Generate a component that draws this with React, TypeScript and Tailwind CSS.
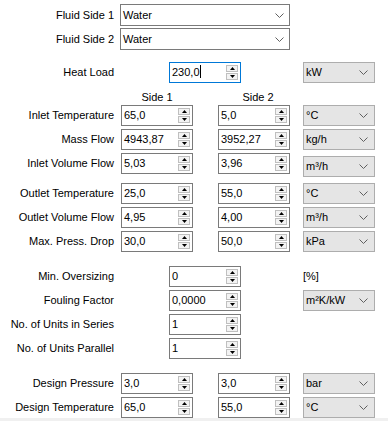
import * as React from 'react';

const Chevron = () => (
  <svg width="9" height="5" viewBox="0 0 9 5" className="shrink-0">
    <path d="M0.5 0.5 L4.5 4.5 L8.5 0.5" fill="none" stroke="#606060" strokeWidth="1" />
  </svg>
);

const Spinner = () => (
  <div className="flex flex-col gap-[1px] w-[12px] shrink-0">
    <div className="h-[7px] border border-[#bfbfbf] bg-[#f3f3f3] flex items-center justify-center">
      <svg width="5" height="3" viewBox="0 0 5 3">
        <path d="M2.5 0 L5 3 L0 3 Z" fill="#000" />
      </svg>
    </div>
    <div className="h-[7px] border border-[#bfbfbf] bg-[#f3f3f3] flex items-center justify-center">
      <svg width="5" height="3" viewBox="0 0 5 3">
        <path d="M0 0 L5 0 L2.5 3 Z" fill="#000" />
      </svg>
    </div>
  </div>
);

const NumBox = ({ value, focused, className = '' }: { value: string; focused?: boolean; className?: string }) => (
  <div
    className={`w-[72px] h-[21px] border bg-white flex items-center pl-[2px] pr-[2px] shrink-0 ${
      focused ? 'border-[#0078d7]' : 'border-[#7a7a7a]'
    } ${className}`}
  >
    <span className="flex-1 leading-none">
      {value}
      {focused && <span className="inline-block w-px h-[13px] bg-black align-middle -mt-[2px]" />}
    </span>
    <Spinner />
  </div>
);

const UnitBox = ({ unit, className = '' }: { unit: string; className?: string }) => (
  <div className={`w-[72px] h-[21px] border border-[#adadad] bg-[#e5e5e5] flex items-center justify-between pl-[2px] pr-[6px] shrink-0 ${className}`}>
    <span className="leading-none">{unit}</span>
    <Chevron />
  </div>
);

const Label = ({ text }: { text: string }) => (
  <div className="w-[114px] text-right shrink-0 whitespace-nowrap">{text}</div>
);

const SideRow = ({ label, a, b, unit, unitClass }: { label: string; a: string; b: string; unit: string; unitClass?: string }) => (
  <div className="flex items-center h-[21px]">
    <Label text={label} />
    <NumBox value={a} className="ml-[7px]" />
    <NumBox value={b} className="ml-[25px]" />
    <UnitBox unit={unit} className={`ml-[13px] ${unitClass ?? ''}`} />
  </div>
);

const SingleRow = ({ label, value, focused, right }: { label: string; value: string; focused?: boolean; right?: React.ReactNode }) => (
  <div className="flex items-center h-[21px]">
    <Label text={label} />
    <NumBox value={value} focused={focused} className="ml-[55px]" />
    <div className="ml-[62px]">{right}</div>
  </div>
);

const FluidRow = ({ label, value }: { label: string; value: string }) => (
  <div className="flex items-center h-[22px]">
    <Label text={label} />
    <div className="ml-[6px] w-[170px] h-[22px] border border-[#7a7a7a] bg-white flex items-center justify-between pl-[2px] pr-[5px]">
      <span className="leading-none">{value}</span>
      <Chevron />
    </div>
  </div>
);

export default function App() {
  return (
    <div
      className="w-[388px] h-[421px] bg-white flex flex-col text-[11px] text-black pt-[4px]"
      style={{ fontFamily: '"Liberation Sans", Arial, sans-serif' }}
    >
      <FluidRow label="Fluid Side 1" value="Water" />
      <div className="mt-[2px]">
        <FluidRow label="Fluid Side 2" value="Water" />
      </div>

      <div className="mt-[12px]">
        <SingleRow label="Heat Load" value="230,0" focused right={<UnitBox unit="kW" />} />
      </div>

      <div className="flex h-[22px] pt-[7px] leading-[14px]">
        <div className="ml-[121px] w-[72px] text-center">Side 1</div>
        <div className="ml-[29px] w-[72px] text-center">Side 2</div>
      </div>

      <div className="flex flex-col gap-[3px]">
        <SideRow label="Inlet Temperature" a="65,0" b="5,0" unit="°C" />
        <SideRow label="Mass Flow" a="4943,87" b="3952,27" unit="kg/h" />
        <SideRow label="Inlet Volume Flow" a="5,03" b="3,96" unit="m³/h" unitClass="mt-[6px]" />
      </div>

      <div className="flex flex-col gap-[3px] mt-[9px]">
        <SideRow label="Outlet Temperature" a="25,0" b="55,0" unit="°C" />
        <SideRow label="Outlet Volume Flow" a="4,95" b="4,00" unit="m³/h" />
        <SideRow label="Max. Press. Drop" a="30,0" b="50,0" unit="kPa" />
      </div>

      <div className="flex flex-col gap-[3px] mt-[14px]">
        <SingleRow label="Min. Oversizing" value="0" right={<span className="pl-[0px]">[%]</span>} />
        <SingleRow label="Fouling Factor" value="0,0000" right={<UnitBox unit="m²K/kW" />} />
        <SingleRow label="No. of Units in Series" value="1" />
        <SingleRow label="No. of Units Parallel" value="1" />
      </div>

      <div className="flex flex-col gap-[3px] mt-[14px]">
        <SideRow label="Design Pressure" a="3,0" b="3,0" unit="bar" />
        <SideRow label="Design Temperature" a="65,0" b="55,0" unit="°C" />
      </div>

      <div className="mt-auto h-[3px] bg-[#f0f0f0]" />
    </div>
  );
}
